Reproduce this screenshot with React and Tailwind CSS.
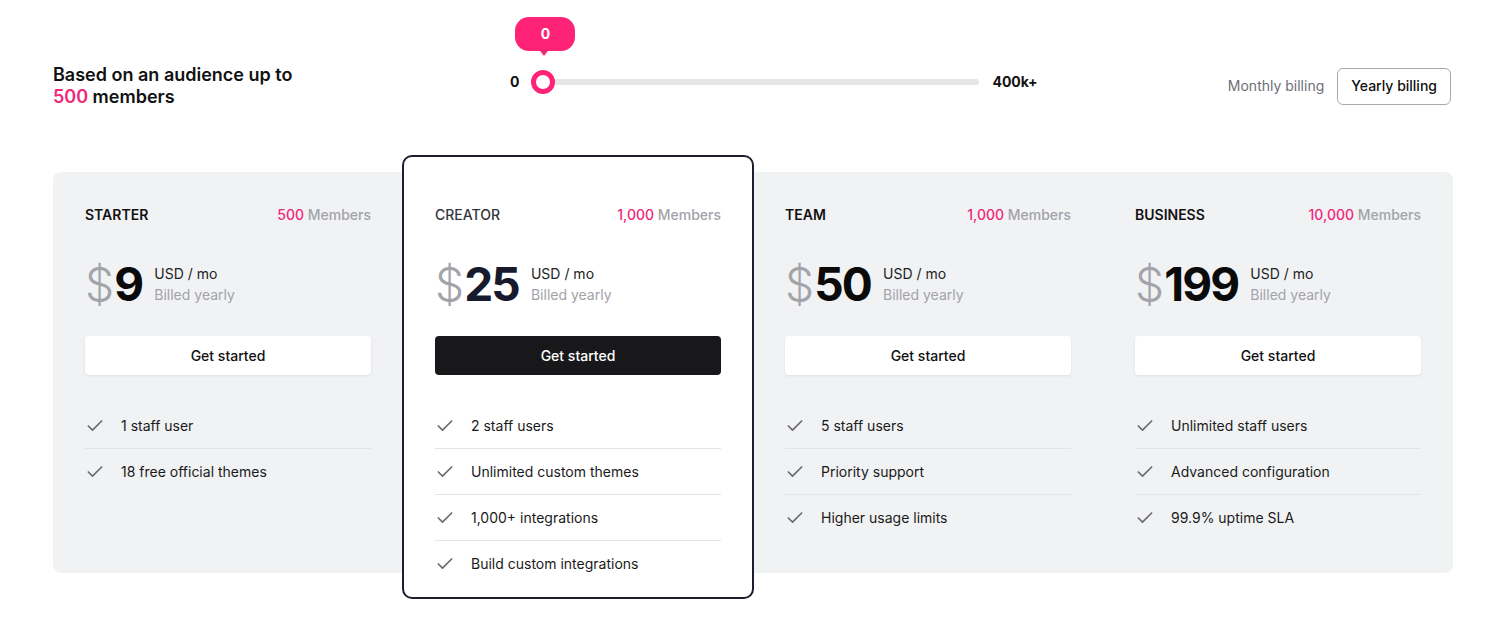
import React from "react";

const font = { fontFamily: "Inter, 'Noto Sans', sans-serif" };

function Check() {
  return (
    <svg width="20" height="20" viewBox="0 0 24 24" fill="none" stroke="#6b6b70" strokeWidth="2" strokeLinecap="round" strokeLinejoin="round" className="shrink-0">
      <path d="M20 6 9 17l-5-5" />
    </svg>
  );
}

const plans = [
  { name: "STARTER", members: "500", price: "9", features: ["1 staff user", "18 free official themes"] },
  { name: "CREATOR", members: "1,000", price: "25", featured: true, features: ["2 staff users", "Unlimited custom themes", "1,000+ integrations", "Build custom integrations"] },
  { name: "TEAM", members: "1,000", price: "50", features: ["5 staff users", "Priority support", "Higher usage limits"] },
  { name: "BUSINESS", members: "10,000", price: "199", features: ["Unlimited staff users", "Advanced configuration", "99.9% uptime SLA"] },
];

function PlanBody({ plan }) {
  return (
    <>
      <div className="flex justify-between text-sm leading-5">
        <span className={plan.featured ? "font-medium text-[#34363d]" : "font-semibold text-[#111]"}>{plan.name}</span>
        <span className="font-medium">
          <span className="text-[#f0287a]">{plan.members}</span>
          <span className="text-[#a3a3aa]"> Members</span>
        </span>
      </div>
      <div className="mt-[33px] flex h-[52px] items-center gap-[12px]">
        <div className="text-[46px] leading-[52px] tracking-[-0.04em]">
          <span className="mr-[2px] font-light text-[#a3a3aa]">$</span>
          <span className={plan.featured ? "font-bold text-[#161a2c]" : "font-bold text-[#0a0a0a]"}>{plan.price}</span>
        </div>
        <div className="text-sm leading-[21px]">
          <div className="text-[#222]">USD / mo</div>
          <div className="text-[#a3a3aa]">Billed yearly</div>
        </div>
      </div>
      <button
        className={
          plan.featured
            ? "mt-[26px] h-[39px] w-full rounded-[4px] bg-[#18181b] text-sm font-medium text-white"
            : "mt-[26px] h-[39px] w-full rounded-[4px] bg-white text-sm font-medium text-[#111] shadow-[0_1px_3px_rgba(0,0,0,0.08)]"
        }
      >
        Get started
      </button>
      <ul className="mt-7">
        {plan.features.map((f, i) => (
          <li
            key={f}
            className={
              "flex items-center gap-4 py-3 text-sm leading-[21px] text-[#1a1a1a] " +
              (i < plan.features.length - 1 ? "border-b border-[#e3e4e8]" : "")
            }
          >
            <Check />
            <span>{f}</span>
          </li>
        ))}
      </ul>
    </>
  );
}

export default function App() {
  return (
    <div className="min-h-[634px] bg-white pl-[53px] pr-[47px] pt-[65px]" style={font}>
      <div className="flex h-[40px] items-center">
        <div className="w-[457px] pt-[1px] text-[18px] font-semibold leading-[22px] text-[#111]">
          <div>Based on an audience up to</div>
          <div>
            <span className="text-[#f0287a]">500</span> members
          </div>
        </div>
        <div className="mb-[6px] flex items-center">
          <span className="text-sm font-bold text-[#111]">0</span>
          <div className="relative ml-3 h-[6px] w-[448px] rounded-full bg-[#e6e6e8]">
            <div className="absolute left-0 top-1/2 h-6 w-6 -translate-y-1/2 rounded-full border-[5px] border-[#ff2378] bg-white" />
            <div className="absolute left-[-16px] top-[-62px] flex h-[34px] w-[60px] items-center justify-center rounded-[14px] bg-[#ff2378] text-sm font-bold text-white">
              0
              <div className="absolute left-[22px] top-[30px] h-0 w-0 border-l-[7px] border-r-[7px] border-t-[9px] border-l-transparent border-r-transparent border-t-[#ff2378]" />
            </div>
          </div>
          <span className="ml-[13px] text-sm font-bold text-[#111]">400k+</span>
        </div>
        <div className="ml-auto mr-[2px] flex items-center gap-[13px] pt-[2px]">
          <span className="text-sm text-[#6e6e78]">Monthly billing</span>
          <button className="h-[37px] rounded-md border border-[#a8a8ae] px-[13px] text-sm font-medium text-[#111]">
            Yearly billing
          </button>
        </div>
      </div>

      <div className="mt-[67px] grid grid-cols-4 rounded-lg bg-[#f1f2f4]">
        {plans.map((p) =>
          p.featured ? (
            <div
              key={p.name}
              className="-mx-px mb-[-26px] mt-[-17px] h-[444px] rounded-[10px] border-2 border-[#1c1f2e] bg-white px-[31px] pt-[48px]"
            >
              <PlanBody plan={p} />
            </div>
          ) : (
            <div key={p.name} className="px-8 pb-[33px] pt-[33px]">
              <PlanBody plan={p} />
            </div>
          )
        )}
      </div>
    </div>
  );
}
